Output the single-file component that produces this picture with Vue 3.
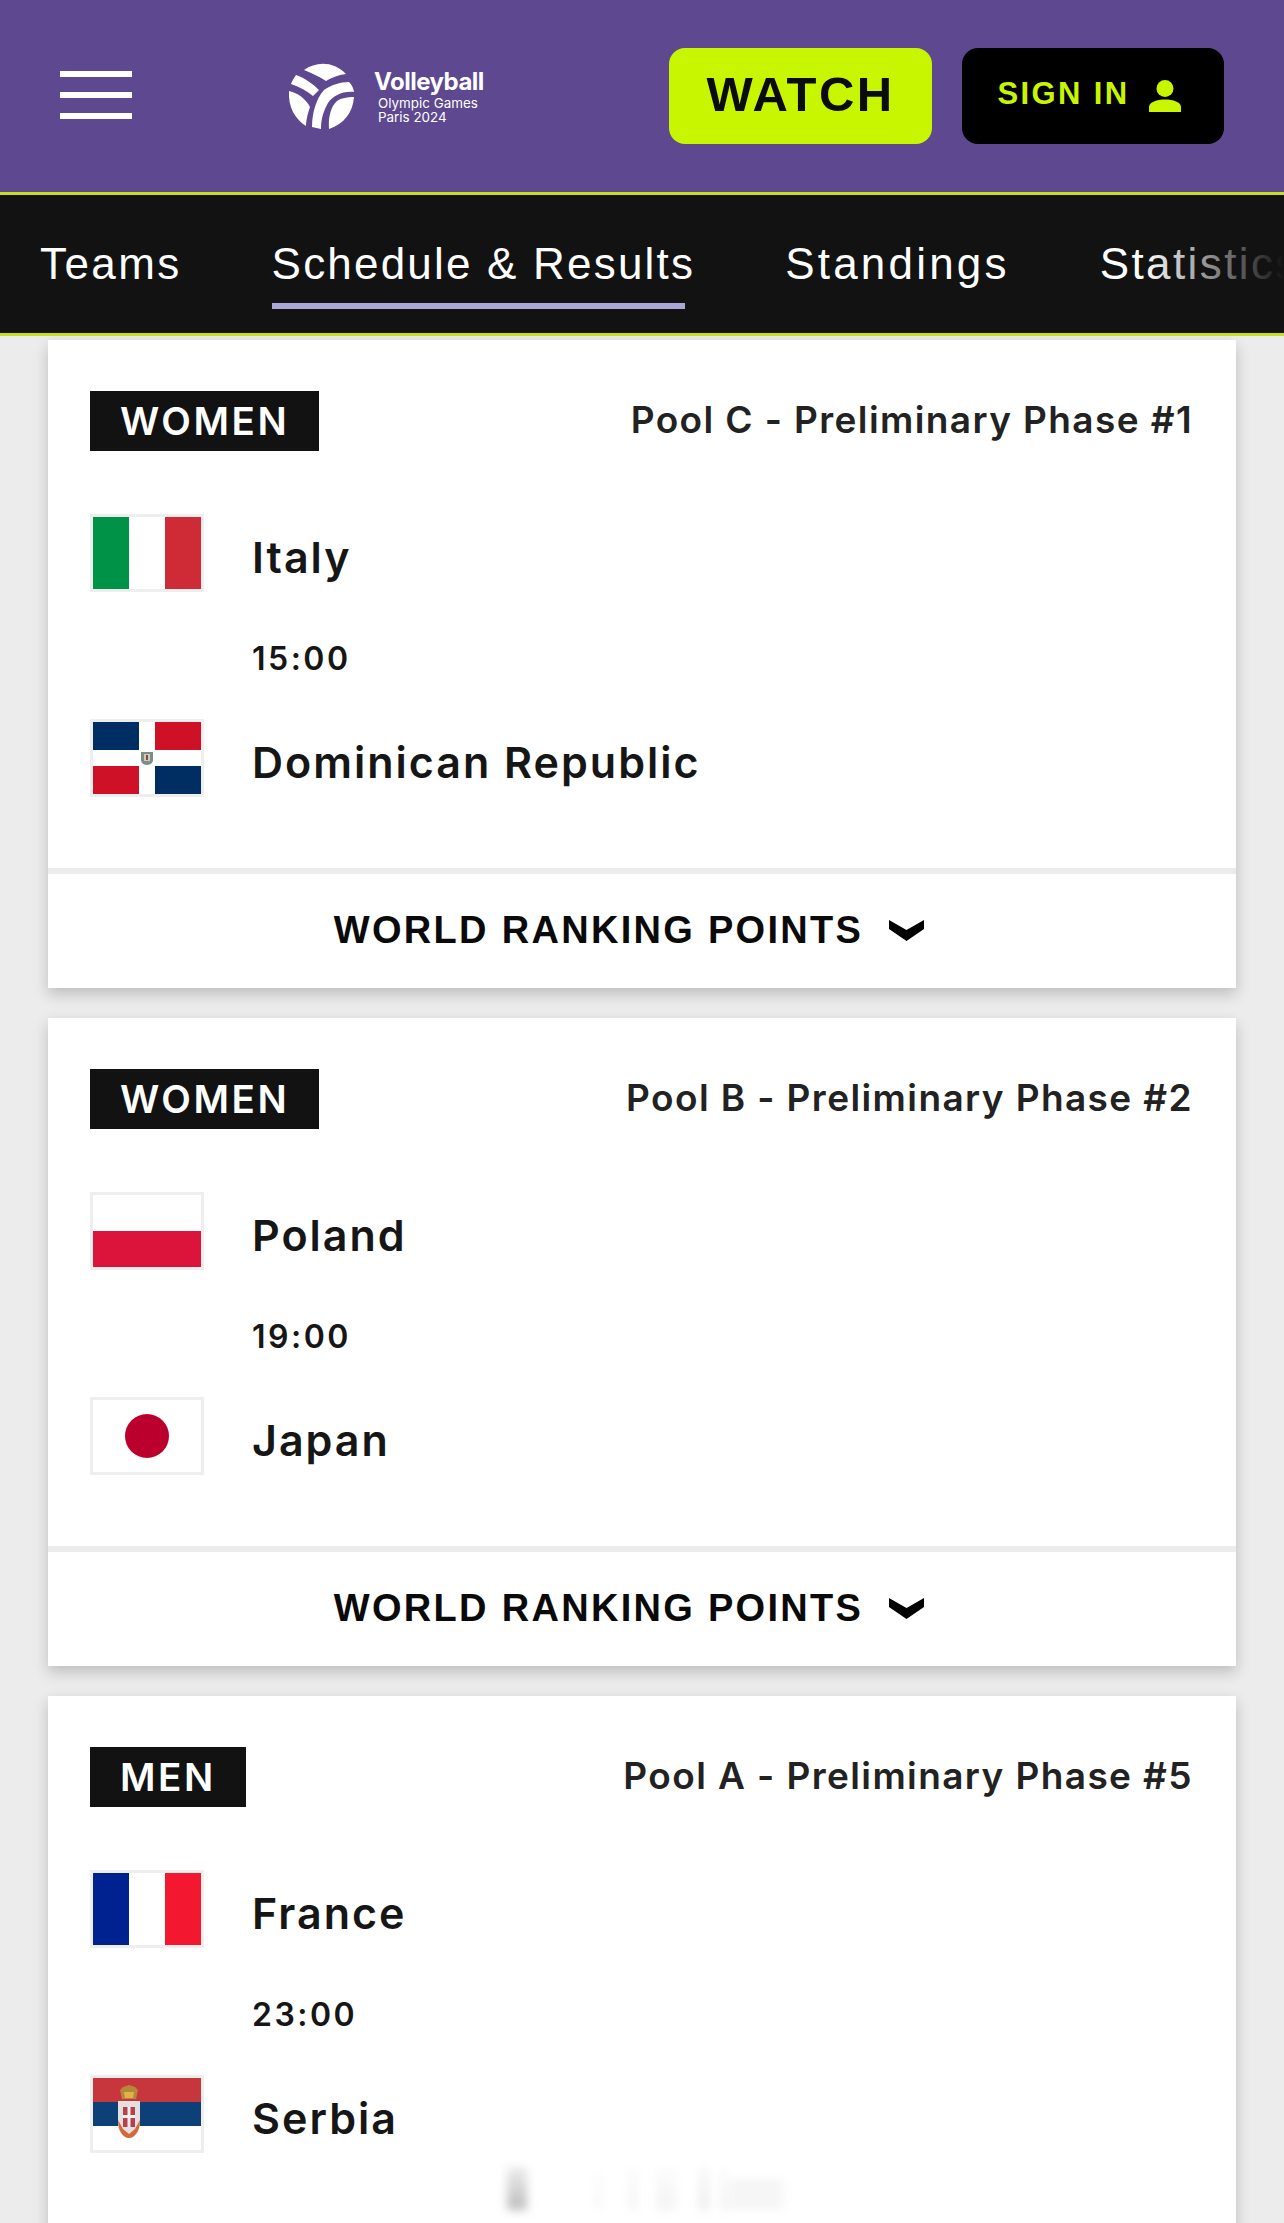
<template>
  <div class="page">
    <header class="top">
      <div class="burger"><span /><span /><span /></div>
      <div class="brand">
        <svg class="brand__mark" viewBox="0 0 66 66">
          <path fill="#fff" d="M16 7 C28 -2 46 -2 58 11 C50 12 43 15 38 18 C32 14 24 10 16 7Z" />
          <path fill="#fff" d="M8 12 C17 15 25 21 31 27 L25 33 C19 28 12 24 3 21 C4 18 6 15 8 12Z" />
          <path fill="#fff" d="M36 27 C43 22 52 19 61 19 C64 22 65.5 25 66 29 C54 28 45 33 40 40 C36 47 33 55 33 66 L24 64 C24 50 28 36 36 27Z" />
          <path fill="#fff" d="M1 28 C10 30 18 36 22 44 C20 50 18 56 18 63 C7 56 0 44 1 28Z" />
          <path fill="#fff" d="M66 34 C65 49 56 61 41 66 C40 54 43 43 49 38 C53 35 60 34 66 34Z" />
        </svg>
        <div class="brand__text">
          <div class="brand__title">Volleyball</div>
          <div class="brand__sub">Olympic Games<br />Paris 2024</div>
        </div>
      </div>
      <div class="top__actions">
        <a class="btn btn--watch">WATCH</a>
        <a class="btn btn--sign">
          SIGN IN
          <svg class="btn__user" viewBox="0 0 32 32">
            <circle cx="16" cy="8.5" r="8.5" fill="currentColor" />
            <path fill="currentColor" d="M0 32 V27 C0 22 8 19.5 16 19.5 C24 19.5 32 22 32 27 V32Z" />
          </svg>
        </a>
      </div>
    </header>

    <nav class="tabs">
      <a v-for="t in tabs" :key="t" class="tabs__item" :class="{ 'tabs__item--on': t === active }">{{ t }}</a>
      <div class="tabs__fade" />
    </nav>

    <main class="list">
      <section v-for="m in matches" :key="m.time + m.pool" class="card">
        <div class="card__body">
          <div class="card__head">
            <span class="tag">{{ m.gender }}</span>
            <span class="pool">{{ m.pool }}</span>
          </div>
          <div class="team">
            <div class="flag"><component :is="flags[m.home.code]" /></div>
            <span class="team__name">{{ m.home.name }}</span>
          </div>
          <div class="time">{{ m.time }}</div>
          <div class="team">
            <div class="flag"><component :is="flags[m.away.code]" /></div>
            <span class="team__name">{{ m.away.name }}</span>
          </div>
        </div>
        <div class="card__foot">
          WORLD RANKING POINTS
          <svg class="chev" viewBox="0 0 35 21"><path d="M0 0 L17.5 10 L35 0 V9 L17.5 21 L0 9Z" /></svg>
        </div>
      </section>
    </main>

    <!-- размытый кусок поверх карточки -->
    <div class="smear" aria-hidden="true">
      <i v-for="(s, n) in smear" :key="n" :style="{ left: s.x + 'px', width: s.w + 'px', opacity: s.o }" />
      <b /><b /><b />
    </div>
  </div>
</template>

<script setup>
import { h } from 'vue'

const tabs = ['Teams', 'Schedule & Results', 'Standings', 'Statistics']
const active = 'Schedule & Results'
const smear = [
  { x: 0, w: 20, o: 0.36 },
  { x: 88, w: 6, o: 0.05 },
  { x: 122, w: 8, o: 0.07 },
  { x: 150, w: 8, o: 0.08 },
  { x: 160, w: 8, o: 0.08 },
  { x: 192, w: 10, o: 0.1 },
  { x: 214, w: 8, o: 0.07 },
]

const svg = (...kids) => h('svg', { viewBox: '0 0 108 72', width: 108, height: 72 }, kids)
const rect = (x, y, width, height, fill) => h('rect', { x, y, width, height, fill })

const flags = {
  it: () => svg(rect(0, 0, 36, 72, '#009246'), rect(36, 0, 36, 72, '#fff'), rect(72, 0, 36, 72, '#ce2b37')),
  do: () => svg(
    rect(0, 0, 108, 72, '#fff'),
    rect(0, 0, 46, 28, '#002d62'), rect(62, 0, 46, 28, '#ce1126'),
    rect(0, 44, 46, 28, '#ce1126'), rect(62, 44, 46, 28, '#002d62'),
    h('path', { d: 'M48 30 H60 V38 C60 41 57 43 54 43 C51 43 48 41 48 38Z', fill: '#7d8f84' }),
    rect(51, 32, 6, 7, '#cfc9c0'),
    rect(53, 33, 2, 5, '#8a4a3a')
  ),
  pl: () => svg(rect(0, 0, 108, 36, '#fff'), rect(0, 36, 108, 36, '#dc143c')),
  jp: () => svg(rect(0, 0, 108, 72, '#fff'), h('circle', { cx: 54, cy: 36, r: 22, fill: '#bc002d' })),
  fr: () => svg(rect(0, 0, 36, 72, '#002290'), rect(36, 0, 36, 72, '#fff'), rect(72, 0, 36, 72, '#f31830')),
  rs: () => svg(
    rect(0, 0, 108, 24, '#c6363c'), rect(0, 24, 108, 24, '#0c4076'), rect(0, 48, 108, 24, '#fff'),
    // корона
    h('path', { d: 'M27 12 L30 9 L36 7 L42 9 L45 12 L43 21 H29Z', fill: '#b8863a' }),
    h('path', { d: 'M31 14 H41 L40 20 H32Z', fill: '#e0b24a' }),
    // орёл и щит
    h('path', { d: 'M25 23 H47 V46 C47 55 41 60 36 60 C31 60 25 55 25 46Z', fill: '#e4dfe0' }),
    h('path', { d: 'M25 42 C25 54 31 60 36 60 C41 60 47 54 47 42 L42 51 L36 56 L30 51Z', fill: '#d4693a' }),
    rect(30, 29, 12, 20, '#b8404a'),
    rect(34.5, 29, 3, 20, '#f2eeee'),
    rect(30, 37, 12, 3, '#f2eeee')
  ),
}

const matches = [
  { gender: 'WOMEN', pool: 'Pool C - Preliminary Phase #1', time: '15:00', home: { code: 'it', name: 'Italy' }, away: { code: 'do', name: 'Dominican Republic' } },
  { gender: 'WOMEN', pool: 'Pool B - Preliminary Phase #2', time: '19:00', home: { code: 'pl', name: 'Poland' }, away: { code: 'jp', name: 'Japan' } },
  { gender: 'MEN', pool: 'Pool A - Preliminary Phase #5', time: '23:00', home: { code: 'fr', name: 'France' }, away: { code: 'rs', name: 'Serbia' } },
]
</script>

<style scoped>
.page {
  position: relative;
  height: 2223px;
  overflow: hidden;
  background: #ececec;
  font-family: Inter, "Liberation Sans", sans-serif;
}

.top {
  display: flex;
  align-items: center;
  height: 192px;
  padding: 0 60px;
  background: #5e4890;
  border-bottom: 3px solid #c5e01d;
}
.burger {
  display: flex;
  flex-direction: column;
  gap: 15px;
  width: 72px;
  margin-top: -2px;
}
.burger span { height: 6px; background: #fff; }

.brand {
  display: flex;
  align-items: center;
  gap: 20px;
  margin-left: 156px;
  color: #fff;
}
.brand__mark { width: 66px; height: 66px; }
.brand__title { font-size: 24px; font-weight: 700; line-height: 26px; letter-spacing: -0.5px; }
.brand__sub { font-size: 13.4px; line-height: 14px; margin: 1px 0 0 4px; }

.top__actions { display: flex; gap: 30px; margin-left: auto; }
.btn {
  display: flex;
  align-items: center;
  justify-content: center;
  box-sizing: border-box;
  height: 96px;
  border-radius: 16px;
  font-family: "Liberation Sans", sans-serif;
  font-weight: 700;
}
.btn--watch {
  width: 263px;
  padding-bottom: 5px;
  background: #c8f500;
  color: #0b0b0b;
  font-size: 49px;
  letter-spacing: 2.4px;
}
.btn--sign {
  width: 262px;
  gap: 19px;
  padding: 0 8px 4px 0;
  background: #000;
  color: #c8f500;
  font-size: 31px;
  letter-spacing: 2.4px;
}
.btn__user { width: 32px; height: 32px; margin-top: 4px; }

.tabs {
  position: relative;
  display: flex;
  gap: 90px;
  height: 138px;
  padding-left: 40px;
  overflow: hidden;
  white-space: nowrap;
  background: #121212;
  border-bottom: 3px solid #c5e01d;
  color: #fff;
  font-family: "Liberation Sans", sans-serif;
  font-size: 44px;
  letter-spacing: 2.4px;
}
.tabs__item { position: relative; padding-top: 44px; }
.tabs__item:nth-child(2) { letter-spacing: 2.2px; }
.tabs__item:nth-child(3) { letter-spacing: 3.2px; }
.tabs__item--on::after {
  content: "";
  position: absolute;
  left: 0;
  right: 10px;
  top: 108px;
  height: 6px;
  background: #a9a6d8;
}
.tabs__fade {
  position: absolute;
  top: 0;
  right: 0;
  bottom: 0;
  width: 140px;
  background: linear-gradient(to right, rgba(18, 18, 18, 0), #121212);
}

.list {
  display: flex;
  flex-direction: column;
  gap: 30px;
  margin: 4px 48px 0;
}
.card {
  background: #fff;
  box-shadow: 0 6px 14px rgba(0, 0, 0, 0.2);
  color: #161616;
}
.card__body { padding: 51px 43px 71px 42px; border-bottom: 6px solid #ececec; }
.card__head { display: flex; align-items: center; justify-content: space-between; margin-bottom: 63px; }
.tag {
  padding: 0 30px;
  height: 60px;
  line-height: 60px;
  background: #121212;
  color: #fff;
  font-size: 38.5px;
  font-weight: 600;
  letter-spacing: 2.6px;
}
.pool { font-size: 37px; font-weight: 600; letter-spacing: 1.4px; color: #222; margin-top: -3px; }

.team { display: flex; align-items: center; gap: 48px; }
.team__name { font-size: 43px; font-weight: 600; letter-spacing: 2px; margin-top: 8px; }
.flag {
  width: 108px;
  height: 72px;
  border: 3px solid #eeeeee;
  flex-shrink: 0;
  line-height: 0;
}
.time {
  margin: 45px 0 38px 162px;
  font-size: 32px;
  line-height: 44px;
  font-weight: 600;
  letter-spacing: 2.5px;
}

.card__foot {
  display: flex;
  align-items: center;
  justify-content: center;
  gap: 26px;
  box-sizing: border-box;
  height: 114px;
  padding: 0 26px 1px 0;
  color: #0a0a0a;
  font-family: "Liberation Sans", sans-serif;
  font-size: 38px;
  font-weight: 700;
  letter-spacing: 2.3px;
}
.chev { width: 35px; height: 21px; }

.smear {
  position: absolute;
  left: 507px;
  top: 2167px;
  width: 276px;
  height: 43px;
  filter: blur(5px);
}
.smear i {
  position: absolute;
  top: 0;
  bottom: 0;
  background: linear-gradient(to bottom, #ccc, #444);
}
.smear b {
  position: absolute;
  left: 224px;
  right: 0;
  height: 3px;
  background: #999;
  opacity: 0.3;
}
.smear b:nth-of-type(1) { top: 16px; }
.smear b:nth-of-type(2) { top: 26px; }
.smear b:nth-of-type(3) { top: 36px; }
</style>
